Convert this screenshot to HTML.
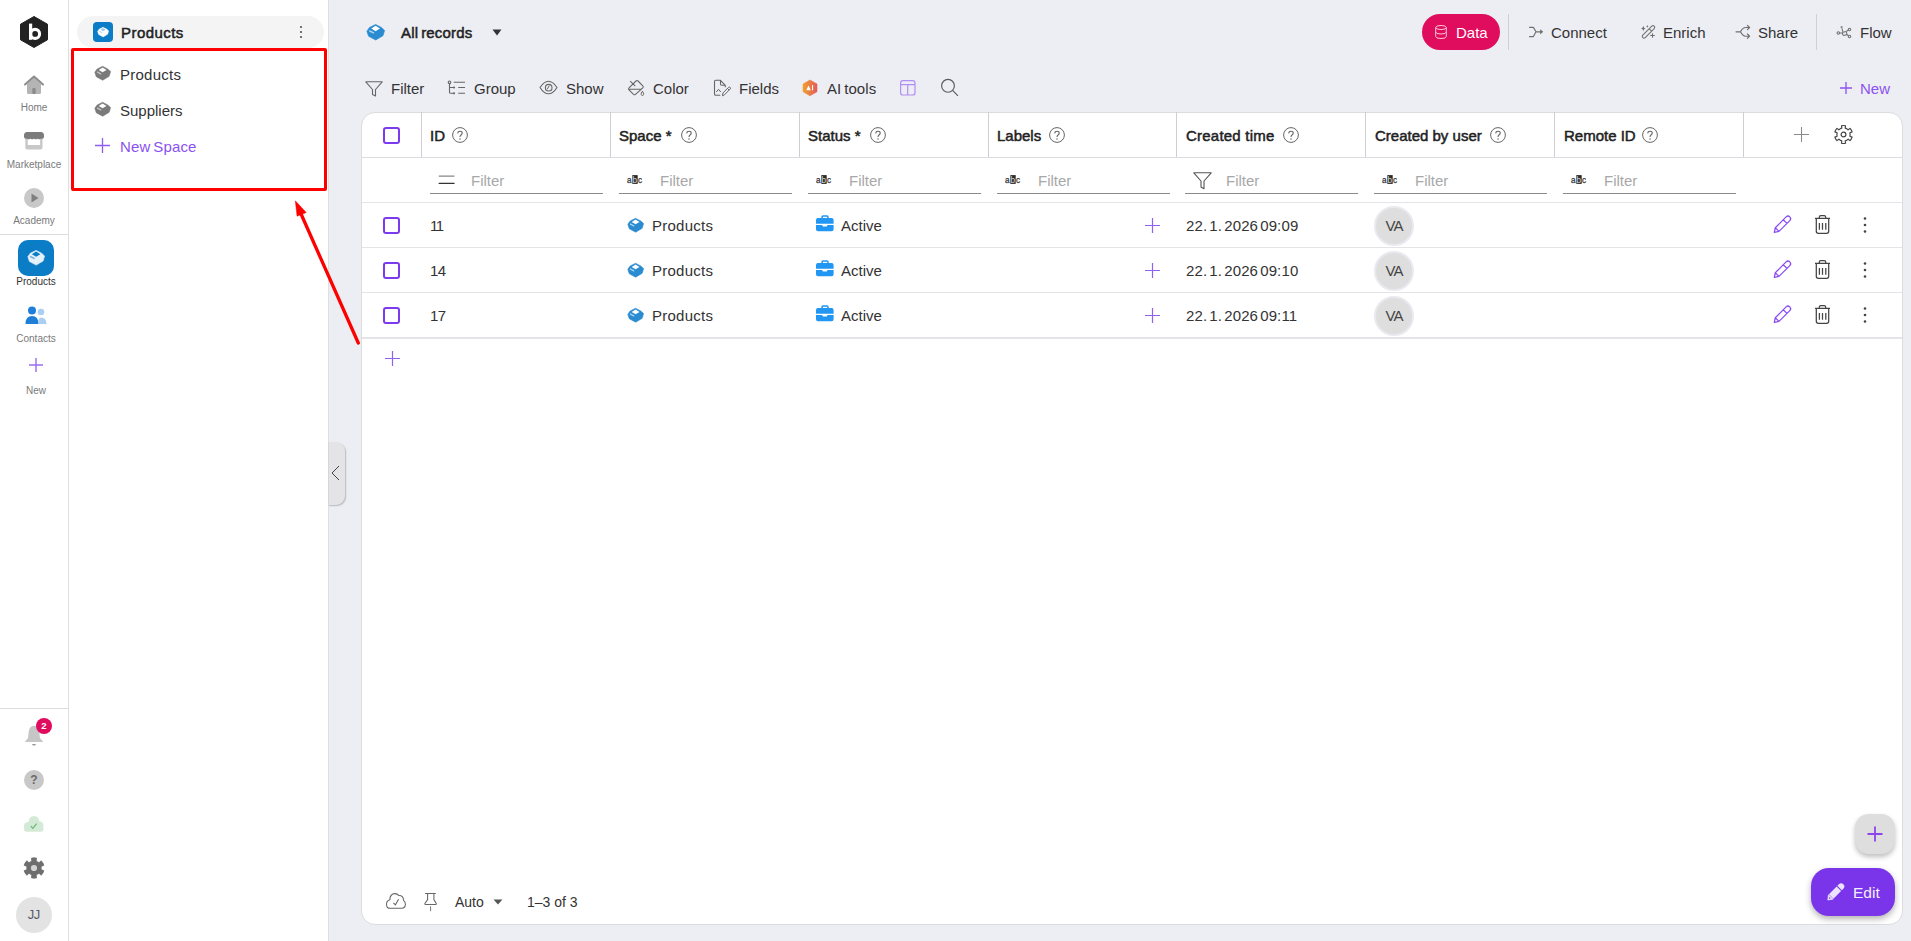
<!DOCTYPE html>
<html><head><meta charset="utf-8">
<style>
*{box-sizing:border-box;margin:0;padding:0}
html,body{width:1911px;height:941px;overflow:hidden;background:#edeef3;font-family:"Liberation Sans",sans-serif;color:#222}
.abs{position:absolute}
.rail{position:absolute;left:0;top:0;width:69px;height:941px;background:#fff;border-right:1px solid #dfdfdf}
.rl{position:absolute;left:0;width:68px;text-align:center;font-size:10px;color:#7a7a7a;white-space:nowrap}
.panel{position:absolute;left:69px;top:0;width:260px;height:941px;background:#fff;border-right:1px solid #dfdfdf}
.txt{position:absolute;white-space:nowrap;line-height:1}
svg{position:absolute;overflow:visible}
.tbl{position:absolute;left:361px;top:112px;width:1542px;height:813px;background:#fff;border:1px solid #dcdcdc;border-radius:14px}
.vl{position:absolute;top:112px;width:1px;height:45px;background:#cfcfd3}
.hl{position:absolute;left:362px;width:1540px;height:1px;background:#e3e3e8}
.cb{position:absolute;width:17px;height:17px;border:2px solid #7b3aed;border-radius:3px}
.hd{position:absolute;top:128px;font-size:15px;color:#222;line-height:15px;white-space:nowrap;-webkit-text-stroke:0.5px #222}
.help{position:absolute;top:127px;width:16px;height:16px}
.fl{position:absolute;top:193px;height:1px;background:#8a8a8a}
.fph{position:absolute;top:173px;font-size:15px;color:#a8a8a8;line-height:15px}
.cell{position:absolute;font-size:15px;color:#333;line-height:15px;white-space:nowrap}
.tb{position:absolute;top:81px;font-size:15px;color:#333;line-height:15px;white-space:nowrap}
.hb{position:absolute;top:25px;font-size:15px;color:#333;line-height:15px;white-space:nowrap}
</style></head><body>

<!-- LEFT RAIL -->
<div class="rail">
  <svg style="left:20px;top:16px" width="28" height="32" viewBox="0 0 28 32">
    <path d="M14 0.5 L27.5 8.2 V23.8 L14 31.5 L0.5 23.8 V8.2 Z" fill="#222" stroke="#222" stroke-linejoin="round" stroke-width="1"/>
    <rect x="9" y="7.6" width="3.2" height="16.2" fill="#fff"/>
    <circle cx="15.1" cy="17.9" r="4.5" fill="none" stroke="#fff" stroke-width="3.1"/>
  </svg>
  <!-- home -->
  <svg style="left:24px;top:75px" width="20" height="20" viewBox="0 0 20 20">
    <path d="M3 9 L10 2.5 L17 9 V17.5 Q17 19 15.5 19 H4.5 Q3 19 3 17.5 Z" fill="#b4b4b4"/>
    <path d="M1 9.5 L10 1.5 L19 9.5" fill="none" stroke="#8c8c8c" stroke-width="2" stroke-linecap="round" stroke-linejoin="round"/>
    <rect x="8.3" y="13" width="3.4" height="6" rx="1" fill="#8c8c8c"/>
  </svg>
  <div class="rl" style="top:102px">Home</div>
  <!-- marketplace -->
  <svg style="left:24px;top:131px" width="20" height="19" viewBox="0 0 20 19"><rect x="1.3" y="5" width="17.2" height="13.6" rx="2.2" fill="#c8c8c8"/><rect x="3.8" y="8" width="12.3" height="6" fill="#fff"/><path d="M0 4.5 Q0 1 3 1 H17 Q20 1 20 4.5 V6.3 Q18.8 8.6 17 7.4 Q15.3 9.2 13.5 7.4 Q11.8 9.2 10 7.4 Q8.2 9.2 6.5 7.4 Q4.7 9.2 3 7.4 Q1.2 8.6 0 6.3 Z" fill="#7c7c7c"/></svg>
  <div class="rl" style="top:159px">Marketplace</div>
  <!-- academy -->
  <svg style="left:24px;top:188px" width="20" height="20" viewBox="0 0 20 20">
    <circle cx="10" cy="10" r="10" fill="#c8c8c8"/>
    <path d="M7.5 5.5 L14.5 10 L7.5 14.5 Z" fill="#7e7e7e"/>
  </svg>
  <div class="rl" style="top:215px">Academy</div>
  <div class="abs" style="left:0;top:234px;width:68px;height:1px;background:#dcdce0"></div>
  <!-- products active -->
  <div class="abs" style="left:18px;top:240px;width:36px;height:36px;border-radius:10px;background:#0b7cc6"></div>
  <svg style="left:27px;top:250px" width="18" height="16" viewBox="0 0 17 15"><path d="M8.6 0.3 L13.8 3 L16.6 5.6 L15.2 10.3 L8.7 14.2 L2.3 10.8 L0.8 6.3 L3.1 3 Z" fill="#e4f0fa" stroke="#e4f0fa" stroke-width="0.6" stroke-linejoin="round"/><path d="M8.6 1.3 L12.6 3.9 L8.6 6.4 L4.6 3.9 Z" fill="#0b7cc6"/><path d="M2.9 5.9 L7.2 8.1" stroke="#6fa9d8" stroke-width="1.3"/></svg>
  <div class="rl" style="top:276px;left:2px;color:#333">Products</div>
  <!-- contacts -->
  <svg style="left:25px;top:306px" width="22" height="19" viewBox="0 0 22 19">
    <circle cx="7" cy="4.5" r="4" fill="#1f7fd8"/>
    <path d="M0.5 18 Q0.5 10 7 10 Q13.5 10 13.5 18 Z" fill="#1f7fd8"/>
    <circle cx="16" cy="6" r="3.3" fill="#a9d0f3"/>
    <path d="M13.5 18 Q13 11.5 16 11.5 Q21.5 11.5 21.5 18 Z" fill="#a9d0f3"/>
  </svg>
  <div class="rl" style="top:333px;left:2px">Contacts</div>
  <!-- new -->
  <svg style="left:29px;top:358px" width="14" height="14" viewBox="0 0 14 14">
    <path d="M7 0 V14 M0 7 H14" stroke="#9b6cf0" stroke-width="1.4"/>
  </svg>
  <div class="rl" style="top:385px;left:2px">New</div>

  <div class="abs" style="left:0;top:708px;width:68px;height:1px;background:#dcdce0"></div>
  <!-- bell -->
  <svg style="left:24px;top:724px" width="20" height="24" viewBox="0 0 20 24"><path d="M9.9 1.7 Q5.2 2 4.6 8.5 L4.2 13.2 Q3.8 15.6 1.2 17.2 Q0.8 17.9 1.6 17.9 H18.4 Q19.2 17.9 18.8 17.2 Q16.2 15.6 15.8 13.2 L15.4 8.5 Q14.8 2 9.9 1.7 Z" fill="#c6c6c6"/><path d="M7.8 20.2 H12.2 Q10 22.6 7.8 20.2 Z" fill="#7a7a7a"/></svg>
  <div class="abs" style="left:36px;top:718px;width:16px;height:16px;border-radius:50%;background:#e00c5e;color:#fff;font-size:9.5px;font-weight:bold;text-align:center;line-height:16px">2</div>
  <!-- help -->
  <div class="abs" style="left:24px;top:770px;width:20px;height:20px;border-radius:50%;background:#c8c8c8;color:#6a6a6a;font-size:12px;font-weight:bold;text-align:center;line-height:20px">?</div>
  <!-- cloud -->
  <svg style="left:23px;top:815px" width="21" height="17" viewBox="0 0 21 17"><g fill="#d3ead6"><circle cx="11" cy="6.3" r="5.3"/><circle cx="5.2" cy="11.3" r="4.4"/><circle cx="16.2" cy="10.6" r="4.3"/><rect x="1" y="11" width="19.5" height="5.8" rx="4"/></g><path d="M7.8 11.2 L9.8 13.3 L13.6 8.6" fill="none" stroke="#66bb74" stroke-width="1.2"/></svg>
  <!-- gear -->
  <svg style="left:23px;top:857px" width="22" height="22" viewBox="0 0 22 22"><path d="M13.64 1.15 A10.2 10.2 0 0 0 8.36 1.15 L8.89 4.11 A7.2 7.2 0 0 0 6.09 5.73 L3.79 3.79 A10.2 10.2 0 0 0 1.15 8.36 L3.98 9.38 A7.2 7.2 0 0 0 3.98 12.62 L1.15 13.64 A10.2 10.2 0 0 0 3.79 18.21 L6.09 16.27 A7.2 7.2 0 0 0 8.89 17.89 L8.36 20.85 A10.2 10.2 0 0 0 13.64 20.85 L13.11 17.89 A7.2 7.2 0 0 0 15.91 16.27 L18.21 18.21 A10.2 10.2 0 0 0 20.85 13.64 L18.02 12.62 A7.2 7.2 0 0 0 18.02 9.38 L20.85 8.36 A10.2 10.2 0 0 0 18.21 3.79 L15.91 5.73 A7.2 7.2 0 0 0 13.11 4.11 Z" fill="#6e6e6e" stroke="#6e6e6e" stroke-width="0.8" stroke-linejoin="round"/><circle cx="11" cy="11" r="3.1" fill="#d4d4d4"/></svg>
  <!-- avatar -->
  <div class="abs" style="left:16px;top:897px;width:36px;height:36px;border-radius:50%;background:#e3e3e3;color:#5a5a6a;font-size:13px;text-align:center;line-height:36px;letter-spacing:-0.4px;text-indent:-0.5px">JJ</div>
</div>

<!-- PANEL -->
<div class="panel"></div>
<div class="abs" style="left:77px;top:16px;width:247px;height:32px;border-radius:16px;background:#f4f4f5"></div>
<div class="abs" style="left:93px;top:22px;width:20px;height:20px;border-radius:4px;background:#0b7cc6"></div>
<svg style="left:97px;top:27px" width="12" height="10.5" viewBox="0 0 17 15"><path d="M8.6 0.3 L13.8 3 L16.6 5.6 L15.2 10.3 L8.7 14.2 L2.3 10.8 L0.8 6.3 L3.1 3 Z" fill="#fff" stroke="#fff" stroke-width="0.6" stroke-linejoin="round"/><path d="M8.6 1.6 L12.3 3.9 L8.6 6.1 L4.9 3.9 Z" fill="#9fcbee"/><path d="M3 5.9 L7.2 8.1" stroke="#9fcbee" stroke-width="1.2"/></svg>
<div class="txt" style="left:121px;top:25px;font-size:15px;color:#222;-webkit-text-stroke:0.5px #222;letter-spacing:0.45px">Products</div>
<svg style="left:299px;top:25px" width="4" height="14" viewBox="0 0 4 14">
  <circle cx="2" cy="2" r="1.1" fill="#555"/><circle cx="2" cy="7" r="1.1" fill="#555"/><circle cx="2" cy="12" r="1.1" fill="#555"/>
</svg>

<svg style="left:94px;top:66px" width="17" height="15" viewBox="0 0 17 15"><path d="M8.6 0.3 L13.8 3 L16.6 5.6 L15.2 10.3 L8.7 14.2 L2.3 10.8 L0.8 6.3 L3.1 3 Z" fill="#7a7a7a" stroke="#7a7a7a" stroke-width="0.6" stroke-linejoin="round"/><path d="M8.6 1.4 L12.5 3.9 L8.6 6.3 L4.7 3.9 Z" fill="#fff"/><path d="M3 5.9 L7.2 8.1" stroke="#c4c4c4" stroke-width="1.4"/></svg>
<div class="txt" style="left:120px;top:67px;font-size:15px;color:#333;letter-spacing:0.25px">Products</div>
<svg style="left:94px;top:102px" width="17" height="15" viewBox="0 0 17 15"><path d="M8.6 0.3 L13.8 3 L16.6 5.6 L15.2 10.3 L8.7 14.2 L2.3 10.8 L0.8 6.3 L3.1 3 Z" fill="#7a7a7a" stroke="#7a7a7a" stroke-width="0.6" stroke-linejoin="round"/><path d="M8.6 1.4 L12.5 3.9 L8.6 6.3 L4.7 3.9 Z" fill="#fff"/><path d="M3 5.9 L7.2 8.1" stroke="#c4c4c4" stroke-width="1.4"/></svg>
<div class="txt" style="left:120px;top:103px;font-size:15px;color:#333">Suppliers</div>
<svg style="left:95px;top:138px" width="15" height="15" viewBox="0 0 15 15">
  <path d="M7.5 0 V15 M0 7.5 H15" stroke="#8f5cf0" stroke-width="1.3"/>
</svg>
<div class="txt" style="left:120px;top:139px;font-size:15px;color:#8b52f0;word-spacing:-1.5px;letter-spacing:0.15px">New Space</div>

<!-- collapse handle -->
<div class="abs" style="left:329px;top:442px;width:16px;height:63px;background:#e4e4e7;border-radius:0 9px 9px 0;box-shadow:0.5px 1px 1.5px rgba(0,0,0,0.22)"></div>
<svg style="left:330px;top:465px" width="11" height="16" viewBox="0 0 11 16"><path d="M9 1 L2 8 L9 15" fill="none" stroke="#444" stroke-width="1"/></svg>

<!-- MAIN -->
<!-- header bar -->
<svg style="left:366px;top:24px" width="19" height="17" viewBox="0 0 17 15"><path d="M8.6 0.3 L13.8 3 L16.6 5.6 L15.2 10.3 L8.7 14.2 L2.3 10.8 L0.8 6.3 L3.1 3 Z" fill="#2a8bd0" stroke="#2a8bd0" stroke-width="0.6" stroke-linejoin="round"/><path d="M8.6 1.4 L12.5 3.9 L8.6 6.3 L4.7 3.9 Z" fill="#fff"/><path d="M3 5.9 L7.2 8.1" stroke="#a9d2ef" stroke-width="1.4"/></svg>
<div class="txt" style="left:401px;top:25px;font-size:15px;color:#222;-webkit-text-stroke:0.5px #222;letter-spacing:0.2px;word-spacing:-1.5px">All records</div>
<svg style="left:492px;top:29px" width="10" height="7" viewBox="0 0 10 7"><path d="M0.5 0.5 H9.5 L5 6.5 Z" fill="#333"/></svg>

<div class="abs" style="left:1422px;top:14px;width:78px;height:36px;border-radius:18px;background:#e00c5e"></div>
<svg style="left:1435px;top:25px" width="12" height="14" viewBox="0 0 12 14">
  <ellipse cx="6" cy="2.5" rx="5.3" ry="2" fill="none" stroke="#ffc4d8" stroke-width="1"/>
  <path d="M0.7 2.5 V11.5 Q0.7 13.5 6 13.5 Q11.3 13.5 11.3 11.5 V2.5 M0.7 7 Q0.7 9 6 9 Q11.3 9 11.3 7" fill="none" stroke="#ffc4d8" stroke-width="1"/>
</svg>
<div class="txt" style="left:1456px;top:25px;font-size:15px;color:#fff">Data</div>
<div class="abs" style="left:1508px;top:14px;width:1px;height:36px;background:#cfcfd4"></div>
<svg style="left:1525px;top:20px" width="23" height="24" viewBox="0 0 23 24"><path d="M4.1 7.4 H8.4 L11 11.8 L8.4 16.6 H4.1 M11 11.8 H16" fill="none" stroke="#6f6f6f" stroke-width="1.15" stroke-linejoin="round"/><path d="M15.2 9.2 L18.2 11.8 L15.2 14.6 Z" fill="#6f6f6f"/></svg>
<div class="hb" style="left:1551px">Connect</div>
<svg style="left:1638px;top:20px" width="23" height="24" viewBox="0 0 23 24"><path d="M4.8 15.2 L13.8 6.2 Q15 5 16.2 6.2 Q17.4 7.4 16.2 8.6 L7.2 17.6 Q6 18.8 4.8 17.6 Q3.6 16.4 4.8 15.2 Z M11.2 8.8 L13.6 11.2" fill="none" stroke="#6f6f6f" stroke-width="1.05" stroke-linejoin="round"/><path d="M5.3 5.8 Q5.6 8.3 7.6 8.6 Q5.6 8.9 5.3 11.2 Q5 8.9 3 8.6 Q5 8.3 5.3 5.8 Z" fill="#6f6f6f"/><path d="M9.4 5.2 L10.4 6.4 L9.4 7.4 L8.4 6.4 Z" fill="#6f6f6f"/><path d="M14.5 13.2 V17.8 M12.2 15.5 H16.8" stroke="#6f6f6f" stroke-width="1.05"/></svg>
<div class="hb" style="left:1663px">Enrich</div>
<svg style="left:1732px;top:20px" width="23" height="24" viewBox="0 0 23 24"><path d="M4 11.8 H8.5 Q10.8 7.5 13.5 7.5 H17.3 M8.5 11.8 Q10.8 16.2 13.5 16.2 H17.3 M15.4 5.3 L17.6 7.5 L15.4 9.7 M15.4 14 L17.6 16.2 L15.4 18.4" fill="none" stroke="#6f6f6f" stroke-width="1.15" stroke-linejoin="round" stroke-linecap="round"/></svg>
<div class="hb" style="left:1758px">Share</div>
<div class="abs" style="left:1816px;top:14px;width:1px;height:36px;background:#cfcfd4"></div>
<svg style="left:1832px;top:20px" width="23" height="24" viewBox="0 0 23 24"><path d="M10.8 12.3 L14.3 11.5 L15 14.6 L12 15.6 L10.5 14.3 Z" fill="none" stroke="#6f6f6f" stroke-width="1.05" stroke-linejoin="round"/><path d="M7.4 12.9 H10.6 M10.9 11.9 L9.9 8.3 M14.5 11.3 L16.5 10 M15 14.8 L16.6 15.8" stroke="#6f6f6f" stroke-width="1.05"/><circle cx="6.3" cy="12.9" r="1.25" fill="none" stroke="#6f6f6f" stroke-width="1.05"/><circle cx="9.6" cy="7.2" r="1.1" fill="#8a8a8a"/><circle cx="17.5" cy="9.5" r="1.25" fill="none" stroke="#6f6f6f" stroke-width="1.05"/><circle cx="17.5" cy="16.4" r="1.25" fill="none" stroke="#6f6f6f" stroke-width="1.05"/></svg>
<div class="hb" style="left:1860px">Flow</div>

<!-- toolbar -->
<svg style="left:365px;top:81px" width="18" height="16" viewBox="0 0 18 16">
  <path d="M0.8 0.8 H17.2 L10.5 8.5 V15 L7.5 13.5 V8.5 Z" fill="none" stroke="#666" stroke-width="1.1" stroke-linejoin="round"/>
</svg>
<div class="tb" style="left:391px">Filter</div>
<svg style="left:440px;top:76px" width="30" height="24" viewBox="0 0 30 24"><circle cx="9.5" cy="6.3" r="1.3" fill="none" stroke="#666" stroke-width="1.1"/><path d="M9.5 7.6 V16.2 Q9.5 17.3 10.6 17.3 H13 M9.5 11.5 H13" fill="none" stroke="#666" stroke-width="1.1"/><circle cx="14" cy="11.5" r="1.1" fill="#666"/><circle cx="14" cy="17.3" r="1.1" fill="#666"/><path d="M13.7 6.3 H25 M18.2 11.5 H25 M18.2 17.3 H25" stroke="#666" stroke-width="1.1"/></svg>
<div class="tb" style="left:474px">Group</div>
<svg style="left:535px;top:76px" width="26" height="24" viewBox="0 0 26 24"><path d="M5 11.5 Q9 5.2 13.5 5.2 Q18 5.2 22 11.5 Q18 17.8 13.5 17.8 Q9 17.8 5 11.5 Z" fill="none" stroke="#666" stroke-width="1.1" stroke-linejoin="round"/><circle cx="13.7" cy="11.7" r="3.3" fill="none" stroke="#666" stroke-width="1.1"/><path d="M12.3 13.2 L14.3 9.6" stroke="#666" stroke-width="1"/></svg>
<div class="tb" style="left:566px">Show</div>
<svg style="left:624px;top:76px" width="26" height="24" viewBox="0 0 26 24"><path d="M12 5 Q13 4 14 5 L18.8 9.8 Q19.8 10.8 18.8 11.8 L11.5 18.3 Q10.5 19.2 9.5 18.3 L5 13.8 Q4 12.8 5 11.8 Z M4.5 13.2 H16.8 M6.2 5.2 L11.3 10.2" fill="none" stroke="#666" stroke-width="1.1" stroke-linejoin="round"/><path d="M18.4 15.2 Q16.8 17.5 17.2 18.5 Q17.6 19.5 18.4 19.5 Q19.3 19.5 19.6 18.5 Q20 17.5 18.4 15.2 Z" fill="none" stroke="#666" stroke-width="1"/></svg>
<div class="tb" style="left:653px">Color</div>
<svg style="left:708px;top:76px" width="26" height="24" viewBox="0 0 26 24"><path d="M17.3 11.3 V9.3 L12.5 4.3 H7.8 Q6.5 4.3 6.5 5.6 V18 Q6.5 19.3 7.8 19.3 H12.3 M12.5 4.3 V8 Q12.5 9.2 13.7 9.2 H17.2" fill="none" stroke="#666" stroke-width="1.1" stroke-linejoin="round"/><path d="M8.3 16 L10.5 13.3 L12.8 16" fill="none" stroke="#666" stroke-width="1"/><path d="M14.5 19.8 L14.9 17 L20.6 11.3 Q21.4 10.6 22.2 11.4 Q22.9 12.2 22.2 13 L16.5 18.8 Z M19.5 12.5 L21 14" fill="none" stroke="#666" stroke-width="1" stroke-linejoin="round"/></svg>
<div class="tb" style="left:739px">Fields</div>
<svg style="left:798px;top:76px" width="24" height="24" viewBox="0 0 24 24"><defs><linearGradient id="aig" x1="0" y1="0" x2="1" y2="0"><stop offset="0" stop-color="#f0a02a"/><stop offset="1" stop-color="#e45a5e"/></linearGradient></defs><path d="M12 4 L19 8 V15.7 L12 19.8 L5 15.7 V8 Z" fill="url(#aig)" stroke="url(#aig)" stroke-width="0.6" stroke-linejoin="round"/><path d="M8.2 14.2 L10.5 9.6 L12.8 14.2 Z" fill="#fff"/><rect x="14" y="9.2" width="1.1" height="5" fill="#fff"/></svg>
<div class="tb" style="left:827px;word-spacing:-1.5px;letter-spacing:0.1px">AI tools</div>
<svg style="left:900px;top:80px" width="16" height="16" viewBox="0 0 16 16"><rect x="0.6" y="0.6" width="14.4" height="14.4" rx="2.3" fill="none" stroke="#b18ef5" stroke-width="1.2"/><path d="M0.6 4.7 H15 M7.7 4.7 V15" stroke="#b18ef5" stroke-width="1.2"/></svg>
<svg style="left:941px;top:79px" width="19" height="19" viewBox="0 0 19 19"><circle cx="7" cy="6.8" r="6.4" fill="none" stroke="#5a5a5a" stroke-width="1.15"/><path d="M11.6 11.4 L17 16.8" stroke="#5a5a5a" stroke-width="1.15"/></svg>
<svg style="left:1840px;top:82px" width="12" height="12" viewBox="0 0 12 12"><path d="M6 0 V12 M0 6 H12" stroke="#8b52f0" stroke-width="1.3"/></svg>
<div class="tb" style="left:1860px;color:#8b52f0">New</div>

<!--TABLE-->
<div class="tbl"></div>
<div class="vl" style="left:421px"></div>
<div class="vl" style="left:610px"></div>
<div class="vl" style="left:799px"></div>
<div class="vl" style="left:988px"></div>
<div class="vl" style="left:1176px"></div>
<div class="vl" style="left:1365px"></div>
<div class="vl" style="left:1554px"></div>
<div class="vl" style="left:1743px"></div>
<div class="hl" style="top:157px;background:#dcdce0"></div>
<div class="hl" style="top:202px"></div>
<div class="hl" style="top:247px"></div>
<div class="hl" style="top:292px"></div>
<div class="hl" style="top:337px;height:2px"></div>
<div class="cb" style="left:383px;top:127px"></div>
<div class="hd" style="left:430px">ID</div>
<svg class="help" style="left:452px" width="16" height="16" viewBox="0 0 16 16"><circle cx="8" cy="8" r="7.4" fill="none" stroke="#666" stroke-width="1"/><path d="M5.6 6.3 Q5.9 4.3 8 4.3 Q10.2 4.3 10.2 6.1 Q10.2 7.3 8.8 8.2 Q8 8.8 8 10" fill="none" stroke="#666" stroke-width="1.1"/><circle cx="8" cy="12" r="0.75" fill="#666"/></svg>
<div class="hd" style="left:619px">Space *</div>
<svg class="help" style="left:681px" width="16" height="16" viewBox="0 0 16 16"><circle cx="8" cy="8" r="7.4" fill="none" stroke="#666" stroke-width="1"/><path d="M5.6 6.3 Q5.9 4.3 8 4.3 Q10.2 4.3 10.2 6.1 Q10.2 7.3 8.8 8.2 Q8 8.8 8 10" fill="none" stroke="#666" stroke-width="1.1"/><circle cx="8" cy="12" r="0.75" fill="#666"/></svg>
<div class="hd" style="left:808px">Status *</div>
<svg class="help" style="left:870px" width="16" height="16" viewBox="0 0 16 16"><circle cx="8" cy="8" r="7.4" fill="none" stroke="#666" stroke-width="1"/><path d="M5.6 6.3 Q5.9 4.3 8 4.3 Q10.2 4.3 10.2 6.1 Q10.2 7.3 8.8 8.2 Q8 8.8 8 10" fill="none" stroke="#666" stroke-width="1.1"/><circle cx="8" cy="12" r="0.75" fill="#666"/></svg>
<div class="hd" style="left:997px">Labels</div>
<svg class="help" style="left:1049px" width="16" height="16" viewBox="0 0 16 16"><circle cx="8" cy="8" r="7.4" fill="none" stroke="#666" stroke-width="1"/><path d="M5.6 6.3 Q5.9 4.3 8 4.3 Q10.2 4.3 10.2 6.1 Q10.2 7.3 8.8 8.2 Q8 8.8 8 10" fill="none" stroke="#666" stroke-width="1.1"/><circle cx="8" cy="12" r="0.75" fill="#666"/></svg>
<div class="hd" style="left:1186px;letter-spacing:0.22px">Created time</div>
<svg class="help" style="left:1283px" width="16" height="16" viewBox="0 0 16 16"><circle cx="8" cy="8" r="7.4" fill="none" stroke="#666" stroke-width="1"/><path d="M5.6 6.3 Q5.9 4.3 8 4.3 Q10.2 4.3 10.2 6.1 Q10.2 7.3 8.8 8.2 Q8 8.8 8 10" fill="none" stroke="#666" stroke-width="1.1"/><circle cx="8" cy="12" r="0.75" fill="#666"/></svg>
<div class="hd" style="left:1375px">Created by user</div>
<svg class="help" style="left:1490px" width="16" height="16" viewBox="0 0 16 16"><circle cx="8" cy="8" r="7.4" fill="none" stroke="#666" stroke-width="1"/><path d="M5.6 6.3 Q5.9 4.3 8 4.3 Q10.2 4.3 10.2 6.1 Q10.2 7.3 8.8 8.2 Q8 8.8 8 10" fill="none" stroke="#666" stroke-width="1.1"/><circle cx="8" cy="12" r="0.75" fill="#666"/></svg>
<div class="hd" style="left:1564px">Remote ID</div>
<svg class="help" style="left:1642px" width="16" height="16" viewBox="0 0 16 16"><circle cx="8" cy="8" r="7.4" fill="none" stroke="#666" stroke-width="1"/><path d="M5.6 6.3 Q5.9 4.3 8 4.3 Q10.2 4.3 10.2 6.1 Q10.2 7.3 8.8 8.2 Q8 8.8 8 10" fill="none" stroke="#666" stroke-width="1.1"/><circle cx="8" cy="12" r="0.75" fill="#666"/></svg>
<svg style="left:1794px;top:127px" width="15" height="15" viewBox="0 0 15 15"><path d="M7.5 0 V15 M0 7.5 H15" stroke="#8a8a8a" stroke-width="1.05"/></svg>
<svg style="left:1833px;top:124px" width="21" height="21" viewBox="0 0 21 21"><path d="M12.52 1.73 A9.0 9.0 0 0 0 8.48 1.73 L8.79 4.12 A6.6 6.6 0 0 0 5.83 5.83 L3.92 4.36 A9.0 9.0 0 0 0 1.89 7.87 L4.12 8.79 A6.6 6.6 0 0 0 4.12 12.21 L1.89 13.13 A9.0 9.0 0 0 0 3.92 16.64 L5.83 15.17 A6.6 6.6 0 0 0 8.79 16.88 L8.48 19.27 A9.0 9.0 0 0 0 12.52 19.27 L12.21 16.88 A6.6 6.6 0 0 0 15.17 15.17 L17.08 16.64 A9.0 9.0 0 0 0 19.11 13.13 L16.88 12.21 A6.6 6.6 0 0 0 16.88 8.79 L19.11 7.87 A9.0 9.0 0 0 0 17.08 4.36 L15.17 5.83 A6.6 6.6 0 0 0 12.21 4.12 Z" fill="none" stroke="#444" stroke-width="1.2" stroke-linejoin="round"/><circle cx="10.5" cy="10.5" r="2.4" fill="none" stroke="#444" stroke-width="1.2"/></svg>
<div class="fl" style="left:430px;width:173px"></div>
<svg style="left:439px;top:174px" width="16" height="11" viewBox="0 0 16 11"><path d="M0.2 2.1 H15 " stroke="#888" stroke-width="1.3" stroke-linecap="round"/><path d="M0.2 9.4 H15" stroke="#333" stroke-width="1.3" stroke-linecap="round"/></svg>
<div class="fph" style="left:471px">Filter</div>
<div class="fl" style="left:619px;width:173px"></div>
<svg style="left:627px;top:175px" width="17" height="10" viewBox="0 0 17 10"><text x="0" y="7.8" font-size="8.2" font-family="Liberation Sans" fill="#333" stroke="#333" stroke-width="0.25">a</text><rect x="5.3" y="0.1" width="5.4" height="8.8" fill="#2a2a2a"/><text x="5.6" y="7.8" font-size="8.2" font-family="Liberation Sans" fill="#ddd">b</text><text x="11.1" y="7.8" font-size="8.2" font-family="Liberation Sans" fill="#333" stroke="#333" stroke-width="0.25">c</text></svg>
<div class="fph" style="left:660px">Filter</div>
<div class="fl" style="left:808px;width:173px"></div>
<svg style="left:816px;top:175px" width="17" height="10" viewBox="0 0 17 10"><text x="0" y="7.8" font-size="8.2" font-family="Liberation Sans" fill="#333" stroke="#333" stroke-width="0.25">a</text><rect x="5.3" y="0.1" width="5.4" height="8.8" fill="#2a2a2a"/><text x="5.6" y="7.8" font-size="8.2" font-family="Liberation Sans" fill="#ddd">b</text><text x="11.1" y="7.8" font-size="8.2" font-family="Liberation Sans" fill="#333" stroke="#333" stroke-width="0.25">c</text></svg>
<div class="fph" style="left:849px">Filter</div>
<div class="fl" style="left:997px;width:173px"></div>
<svg style="left:1005px;top:175px" width="17" height="10" viewBox="0 0 17 10"><text x="0" y="7.8" font-size="8.2" font-family="Liberation Sans" fill="#333" stroke="#333" stroke-width="0.25">a</text><rect x="5.3" y="0.1" width="5.4" height="8.8" fill="#2a2a2a"/><text x="5.6" y="7.8" font-size="8.2" font-family="Liberation Sans" fill="#ddd">b</text><text x="11.1" y="7.8" font-size="8.2" font-family="Liberation Sans" fill="#333" stroke="#333" stroke-width="0.25">c</text></svg>
<div class="fph" style="left:1038px">Filter</div>
<div class="fl" style="left:1185px;width:173px"></div>
<svg style="left:1193px;top:172px" width="19" height="18" viewBox="0 0 19 18"><path d="M0.8 0.8 H18.2 L11 9 V16.8 L8 15 V9 Z" fill="none" stroke="#555" stroke-width="1.1" stroke-linejoin="round"/></svg>
<div class="fph" style="left:1226px">Filter</div>
<div class="fl" style="left:1374px;width:173px"></div>
<svg style="left:1382px;top:175px" width="17" height="10" viewBox="0 0 17 10"><text x="0" y="7.8" font-size="8.2" font-family="Liberation Sans" fill="#333" stroke="#333" stroke-width="0.25">a</text><rect x="5.3" y="0.1" width="5.4" height="8.8" fill="#2a2a2a"/><text x="5.6" y="7.8" font-size="8.2" font-family="Liberation Sans" fill="#ddd">b</text><text x="11.1" y="7.8" font-size="8.2" font-family="Liberation Sans" fill="#333" stroke="#333" stroke-width="0.25">c</text></svg>
<div class="fph" style="left:1415px">Filter</div>
<div class="fl" style="left:1563px;width:173px"></div>
<svg style="left:1571px;top:175px" width="17" height="10" viewBox="0 0 17 10"><text x="0" y="7.8" font-size="8.2" font-family="Liberation Sans" fill="#333" stroke="#333" stroke-width="0.25">a</text><rect x="5.3" y="0.1" width="5.4" height="8.8" fill="#2a2a2a"/><text x="5.6" y="7.8" font-size="8.2" font-family="Liberation Sans" fill="#ddd">b</text><text x="11.1" y="7.8" font-size="8.2" font-family="Liberation Sans" fill="#333" stroke="#333" stroke-width="0.25">c</text></svg>
<div class="fph" style="left:1604px">Filter</div>
<div class="cb" style="left:383px;top:217px"></div>
<div class="cell" style="left:430px;top:218px;letter-spacing:-1.4px">11</div>
<svg style="left:627px;top:218px" width="17" height="15" viewBox="0 0 17 15"><path d="M8.6 0.3 L13.8 3 L16.6 5.6 L15.2 10.3 L8.7 14.2 L2.3 10.8 L0.8 6.3 L3.1 3 Z" fill="#2a8bd0" stroke="#2a8bd0" stroke-width="0.6" stroke-linejoin="round"/><path d="M8.6 1.4 L12.5 3.9 L8.6 6.3 L4.7 3.9 Z" fill="#fff"/><path d="M3 5.9 L7.2 8.1" stroke="#a9d2ef" stroke-width="1.4"/></svg>
<div class="cell" style="left:652px;top:218px;letter-spacing:0.25px">Products</div>
<svg style="left:816px;top:215px" width="18" height="17" viewBox="0 0 18 17"><path d="M5.3 3.5 V2 Q5.3 0.3 7 0.3 H11 Q12.7 0.3 12.7 2 V3.5 H11.2 V2.2 Q11.2 1.8 10.8 1.8 H7.2 Q6.8 1.8 6.8 2.2 V3.5 Z" fill="#2196f3"/><path d="M0 5 Q0 3.1 1.9 3.1 H15.7 Q17.6 3.1 17.6 5 V8.8 H0 Z" fill="#2196f3"/><path d="M0 10 H6 L7 11.4 H10.8 L11.5 10 H17.6 V14.2 Q17.6 16.2 15.6 16.2 H2 Q0 16.2 0 14.2 Z" fill="#2196f3"/></svg>
<div class="cell" style="left:841px;top:218px">Active</div>
<svg style="left:1145px;top:218px" width="15" height="15" viewBox="0 0 15 15"><path d="M7.5 0 V15 M0 7.5 H15" stroke="#9361f0" stroke-width="1.2"/></svg>
<div class="cell" style="left:1186px;top:218px;letter-spacing:0.15px;word-spacing:-2.3px">22. 1. 2026 09:09</div>
<div class="abs" style="left:1374px;top:206px;width:40px;height:40px;border-radius:50%;background:#dedede;border:2px solid #e9e9ef;color:#444;font-size:15px;text-align:center;line-height:36px;letter-spacing:-1px">VA</div>
<svg style="left:1773px;top:216px" width="18" height="18" viewBox="0 0 18 18"><g transform="translate(1.3,16.4) rotate(-45)"><path d="M0 0 L4 -2.6 H19.3 A2.6 2.6 0 0 1 19.3 2.6 H4 Z M4 -2.6 V2.6 M15.3 -2.6 V2.6" fill="none" stroke="#8a4cf5" stroke-width="1.25" stroke-linejoin="round"/></g></svg>
<svg style="left:1815px;top:215px" width="15" height="19" viewBox="0 0 15 19"><path d="M4.3 3.4 V2.2 Q4.3 0.7 5.8 0.7 H9.2 Q10.7 0.7 10.7 2.2 V3.4 M0 3.4 H15 M1.3 4 V16.3 Q1.3 18.4 3.4 18.4 H11.6 Q13.7 18.4 13.7 16.3 V4 M4.4 8 V14.8 M7.5 8 V14.8 M10.8 8 V14.8" fill="none" stroke="#444" stroke-width="1.25"/></svg>
<svg style="left:1863px;top:217px" width="4" height="17" viewBox="0 0 4 17"><circle cx="2" cy="1.5" r="1.3" fill="#444"/><circle cx="2" cy="8" r="1.3" fill="#444"/><circle cx="2" cy="14.5" r="1.3" fill="#444"/></svg>
<div class="cb" style="left:383px;top:262px"></div>
<div class="cell" style="left:430px;top:263px;letter-spacing:-0.6px">14</div>
<svg style="left:627px;top:263px" width="17" height="15" viewBox="0 0 17 15"><path d="M8.6 0.3 L13.8 3 L16.6 5.6 L15.2 10.3 L8.7 14.2 L2.3 10.8 L0.8 6.3 L3.1 3 Z" fill="#2a8bd0" stroke="#2a8bd0" stroke-width="0.6" stroke-linejoin="round"/><path d="M8.6 1.4 L12.5 3.9 L8.6 6.3 L4.7 3.9 Z" fill="#fff"/><path d="M3 5.9 L7.2 8.1" stroke="#a9d2ef" stroke-width="1.4"/></svg>
<div class="cell" style="left:652px;top:263px;letter-spacing:0.25px">Products</div>
<svg style="left:816px;top:260px" width="18" height="17" viewBox="0 0 18 17"><path d="M5.3 3.5 V2 Q5.3 0.3 7 0.3 H11 Q12.7 0.3 12.7 2 V3.5 H11.2 V2.2 Q11.2 1.8 10.8 1.8 H7.2 Q6.8 1.8 6.8 2.2 V3.5 Z" fill="#2196f3"/><path d="M0 5 Q0 3.1 1.9 3.1 H15.7 Q17.6 3.1 17.6 5 V8.8 H0 Z" fill="#2196f3"/><path d="M0 10 H6 L7 11.4 H10.8 L11.5 10 H17.6 V14.2 Q17.6 16.2 15.6 16.2 H2 Q0 16.2 0 14.2 Z" fill="#2196f3"/></svg>
<div class="cell" style="left:841px;top:263px">Active</div>
<svg style="left:1145px;top:263px" width="15" height="15" viewBox="0 0 15 15"><path d="M7.5 0 V15 M0 7.5 H15" stroke="#9361f0" stroke-width="1.2"/></svg>
<div class="cell" style="left:1186px;top:263px;letter-spacing:0.15px;word-spacing:-2.3px">22. 1. 2026 09:10</div>
<div class="abs" style="left:1374px;top:251px;width:40px;height:40px;border-radius:50%;background:#dedede;border:2px solid #e9e9ef;color:#444;font-size:15px;text-align:center;line-height:36px;letter-spacing:-1px">VA</div>
<svg style="left:1773px;top:261px" width="18" height="18" viewBox="0 0 18 18"><g transform="translate(1.3,16.4) rotate(-45)"><path d="M0 0 L4 -2.6 H19.3 A2.6 2.6 0 0 1 19.3 2.6 H4 Z M4 -2.6 V2.6 M15.3 -2.6 V2.6" fill="none" stroke="#8a4cf5" stroke-width="1.25" stroke-linejoin="round"/></g></svg>
<svg style="left:1815px;top:260px" width="15" height="19" viewBox="0 0 15 19"><path d="M4.3 3.4 V2.2 Q4.3 0.7 5.8 0.7 H9.2 Q10.7 0.7 10.7 2.2 V3.4 M0 3.4 H15 M1.3 4 V16.3 Q1.3 18.4 3.4 18.4 H11.6 Q13.7 18.4 13.7 16.3 V4 M4.4 8 V14.8 M7.5 8 V14.8 M10.8 8 V14.8" fill="none" stroke="#444" stroke-width="1.25"/></svg>
<svg style="left:1863px;top:262px" width="4" height="17" viewBox="0 0 4 17"><circle cx="2" cy="1.5" r="1.3" fill="#444"/><circle cx="2" cy="8" r="1.3" fill="#444"/><circle cx="2" cy="14.5" r="1.3" fill="#444"/></svg>
<div class="cb" style="left:383px;top:307px"></div>
<div class="cell" style="left:430px;top:308px;letter-spacing:-0.6px">17</div>
<svg style="left:627px;top:308px" width="17" height="15" viewBox="0 0 17 15"><path d="M8.6 0.3 L13.8 3 L16.6 5.6 L15.2 10.3 L8.7 14.2 L2.3 10.8 L0.8 6.3 L3.1 3 Z" fill="#2a8bd0" stroke="#2a8bd0" stroke-width="0.6" stroke-linejoin="round"/><path d="M8.6 1.4 L12.5 3.9 L8.6 6.3 L4.7 3.9 Z" fill="#fff"/><path d="M3 5.9 L7.2 8.1" stroke="#a9d2ef" stroke-width="1.4"/></svg>
<div class="cell" style="left:652px;top:308px;letter-spacing:0.25px">Products</div>
<svg style="left:816px;top:305px" width="18" height="17" viewBox="0 0 18 17"><path d="M5.3 3.5 V2 Q5.3 0.3 7 0.3 H11 Q12.7 0.3 12.7 2 V3.5 H11.2 V2.2 Q11.2 1.8 10.8 1.8 H7.2 Q6.8 1.8 6.8 2.2 V3.5 Z" fill="#2196f3"/><path d="M0 5 Q0 3.1 1.9 3.1 H15.7 Q17.6 3.1 17.6 5 V8.8 H0 Z" fill="#2196f3"/><path d="M0 10 H6 L7 11.4 H10.8 L11.5 10 H17.6 V14.2 Q17.6 16.2 15.6 16.2 H2 Q0 16.2 0 14.2 Z" fill="#2196f3"/></svg>
<div class="cell" style="left:841px;top:308px">Active</div>
<svg style="left:1145px;top:308px" width="15" height="15" viewBox="0 0 15 15"><path d="M7.5 0 V15 M0 7.5 H15" stroke="#9361f0" stroke-width="1.2"/></svg>
<div class="cell" style="left:1186px;top:308px;letter-spacing:0.15px;word-spacing:-2.3px">22. 1. 2026 09:11</div>
<div class="abs" style="left:1374px;top:296px;width:40px;height:40px;border-radius:50%;background:#dedede;border:2px solid #e9e9ef;color:#444;font-size:15px;text-align:center;line-height:36px;letter-spacing:-1px">VA</div>
<svg style="left:1773px;top:306px" width="18" height="18" viewBox="0 0 18 18"><g transform="translate(1.3,16.4) rotate(-45)"><path d="M0 0 L4 -2.6 H19.3 A2.6 2.6 0 0 1 19.3 2.6 H4 Z M4 -2.6 V2.6 M15.3 -2.6 V2.6" fill="none" stroke="#8a4cf5" stroke-width="1.25" stroke-linejoin="round"/></g></svg>
<svg style="left:1815px;top:305px" width="15" height="19" viewBox="0 0 15 19"><path d="M4.3 3.4 V2.2 Q4.3 0.7 5.8 0.7 H9.2 Q10.7 0.7 10.7 2.2 V3.4 M0 3.4 H15 M1.3 4 V16.3 Q1.3 18.4 3.4 18.4 H11.6 Q13.7 18.4 13.7 16.3 V4 M4.4 8 V14.8 M7.5 8 V14.8 M10.8 8 V14.8" fill="none" stroke="#444" stroke-width="1.25"/></svg>
<svg style="left:1863px;top:307px" width="4" height="17" viewBox="0 0 4 17"><circle cx="2" cy="1.5" r="1.3" fill="#444"/><circle cx="2" cy="8" r="1.3" fill="#444"/><circle cx="2" cy="14.5" r="1.3" fill="#444"/></svg>
<svg style="left:385px;top:351px" width="15" height="15" viewBox="0 0 15 15"><path d="M7.5 0 V15 M0 7.5 H15" stroke="#9361f0" stroke-width="1.2"/></svg>
<svg style="left:386px;top:893px" width="21" height="17" viewBox="0 0 21 17"><path d="M4 15.3 Q0.5 15.3 0.5 11.3 Q0.5 7.6 3.9 6.7 Q4 0.6 8.9 0.6 Q11.5 0.6 12.8 2.5 Q17.4 2.3 17.6 7.4 Q19.4 8.6 19.4 11.3 Q19.4 15.3 15.4 15.3 Z" fill="none" stroke="#666" stroke-width="1.05" stroke-linejoin="round"/><path d="M7.4 9.8 L9.4 11.8 L12.6 6.3" fill="none" stroke="#666" stroke-width="1.05"/></svg>
<svg style="left:424px;top:892px" width="14" height="20" viewBox="0 0 14 20"><path d="M1 1.5 H11.8 M3.6 1.5 V7.6 L0.9 11.5 Q0.5 12.5 1.6 12.5 H11.6 Q12.7 12.5 12.3 11.5 L9.9 7.6 V1.5" fill="none" stroke="#666" stroke-width="1.05" stroke-linejoin="round"/><path d="M6.6 14.4 V19.2" stroke="#777" stroke-width="1"/></svg>
<div class="cell" style="left:455px;top:895px;font-size:14px;color:#333">Auto</div>
<svg style="left:493px;top:899px" width="10" height="6" viewBox="0 0 10 6"><path d="M0.5 0.5 H9.5 L5 5.5 Z" fill="#555"/></svg>
<div class="cell" style="left:527px;top:895px;font-size:14px;color:#333">1–3 of 3</div>
<div class="abs" style="left:1855px;top:814px;width:40px;height:40px;border-radius:14px;background:#dedede;box-shadow:0 3px 5px rgba(0,0,0,0.25)"></div>
<svg style="left:1867px;top:826px" width="16" height="16" viewBox="0 0 16 16"><path d="M8 0.5 V15.5 M0.5 8 H15.5" stroke="#8b44ee" stroke-width="1.8"/></svg>
<div class="abs" style="left:1811px;top:868px;width:84px;height:48px;border-radius:18px;background:#7a35ea;box-shadow:0 3px 6px rgba(0,0,0,0.3)"></div>
<svg style="left:1822px;top:878px" width="28" height="28" viewBox="0 0 28 28"><g transform="translate(5.8,21.9) rotate(-45) scale(0.9)"><path d="M5.3 -3.5 H17.4 V3.5 H5.3 Z M18.6 -3.5 H20.9 A3.5 3.5 0 0 1 20.9 3.5 H18.6 Z" fill="#ece4ff"/><path d="M0 0 L4.6 -3.5 V3.5 Z" fill="#ece4ff" stroke="#ece4ff" stroke-width="0.8" stroke-linejoin="round"/><path d="M1.7 0 L3.4 -1.3 V1.3 Z" fill="#7a35ea"/></g></svg>
<div class="txt" style="left:1853px;top:885px;font-size:15.5px;color:#f4efff">Edit</div>
<div class="abs" style="left:71px;top:48px;width:256px;height:143px;border:3px solid #ff0000;border-radius:2px"></div>
<svg style="left:0;top:0" width="1911" height="941" viewBox="0 0 1911 941"><path d="M358.3 343 L301.5 215" stroke="#ff0000" stroke-width="3.3" stroke-linecap="round"/><path d="M295.3 200.8 L297.1 216.2 L306.2 212.6 Z" fill="#ff0000" stroke="#ff0000" stroke-width="0.5" stroke-linejoin="round"/></svg>
<!--/TABLE-->

</body></html>
